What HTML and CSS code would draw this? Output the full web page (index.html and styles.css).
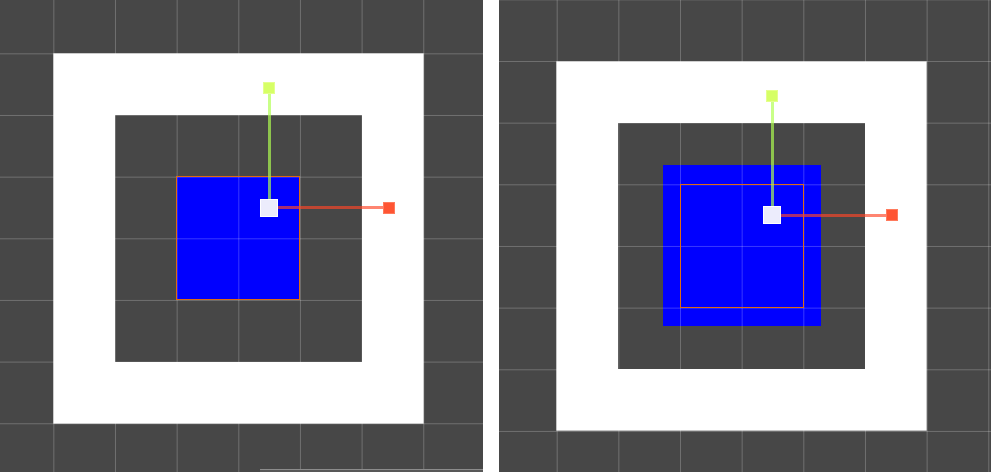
FILE: index.html
```html
<!DOCTYPE html>
<html lang="en">
<head>
<meta charset="utf-8">
<title>Scene views</title>
<link rel="stylesheet" href="styles.css">
</head>
<body>
<div class="views">
  <section class="view view-a">
    <div class="blue blue-a"></div>
    <div class="grid"></div>
    <div class="selection"></div>
    <div class="frame-hole"></div>
    <div class="gizmo">
      <div class="axis axis-y"></div>
      <div class="axis axis-x"></div>
      <div class="handle handle-y"></div>
      <div class="handle handle-x"></div>
      <div class="pivot"></div>
    </div>
    <div class="hscroll"></div>
  </section>
  <section class="view view-b">
    <div class="blue blue-b"></div>
    <div class="grid"></div>
    <div class="selection"></div>
    <div class="frame-hole"></div>
    <div class="gizmo">
      <div class="axis axis-y"></div>
      <div class="axis axis-x"></div>
      <div class="handle handle-y"></div>
      <div class="handle handle-x"></div>
      <div class="pivot"></div>
    </div>
  </section>
</div>
</body>
</html>
```

FILE: styles.css
```css
html, body {
  margin: 0;
  padding: 0;
  background: #ffffff;
}

.views {
  display: flex;
  gap: 16px;
  height: 472px;
}

.view {
  --c: 61.667px;
  --ox: 53.33px;
  --oy: 53.33px;
  --sx: 176px;
  --sy: 176px;
  position: relative;
  overflow: hidden;
  height: 472px;
  background: #474747;
}

.view-a {
  width: 483px;
}

.view-b {
  width: 492px;
  --ox: 57.7px;
  --oy: 61px;
  --sx: 181px;
  --sy: 184px;
}

.grid {
  position: absolute;
  inset: 0;
  z-index: 2;
  background-image:
    linear-gradient(to right, rgba(255, 255, 255, 0.22) 1.2px, transparent 1.2px),
    linear-gradient(to bottom, rgba(255, 255, 255, 0.22) 1.2px, transparent 1.2px);
  background-size: var(--c) var(--c);
  background-position: var(--ox) var(--oy);
}

.blue {
  position: absolute;
  z-index: 1;
  background: #0000ff;
}

.blue-a {
  left: 176px;
  top: 176px;
  width: 124px;
  height: 124px;
}

.blue-b {
  left: calc(var(--ox) + 106.6px);
  top: calc(var(--oy) + 104px);
  width: 157.4px;
  height: 160.7px;
}

.selection {
  position: absolute;
  z-index: 3;
  left: var(--sx);
  top: var(--sy);
  width: 124px;
  height: 124px;
  box-sizing: border-box;
  border: 1px solid #dd6a14;
}

.frame-hole {
  position: absolute;
  z-index: 4;
  left: calc(var(--ox) + 61.667px);
  top: calc(var(--oy) + 61.667px);
  width: 246.67px;
  height: 246.67px;
  box-shadow: 0 0 0 61.667px #ffffff;
}

.gizmo {
  position: absolute;
  z-index: 5;
  left: calc(var(--ox) + 215.7px);
  top: calc(var(--oy) + 154.3px);
  width: 0;
  height: 0;
}

.axis {
  position: absolute;
}

.axis-y {
  left: -1.5px;
  top: -114px;
  width: 3px;
  height: 114px;
  background: rgba(175, 255, 80, 0.68);
}

.axis-x {
  left: 0;
  top: -1.5px;
  width: 114px;
  height: 3px;
  background: rgba(255, 70, 40, 0.66);
}

.handle {
  position: absolute;
  width: 12px;
  height: 12px;
  box-sizing: border-box;
}

.handle-y {
  left: -6px;
  top: -125.8px;
  background: #d6ff66;
  border: 1px solid #e4ff8c;
}

.handle-x {
  left: 114px;
  top: -6px;
  background: #ff5533;
  border: 1px solid #ff7a5c;
}

.pivot {
  position: absolute;
  left: -9px;
  top: -9px;
  width: 18px;
  height: 18px;
  box-sizing: border-box;
  background: #ececfc;
  border: 1px solid #ffffff;
}

.hscroll {
  position: absolute;
  z-index: 6;
  left: 260px;
  right: 0;
  bottom: 0;
  height: 2px;
  background: #585858;
  border-top: 1px solid #8c8c8c;
}
```
